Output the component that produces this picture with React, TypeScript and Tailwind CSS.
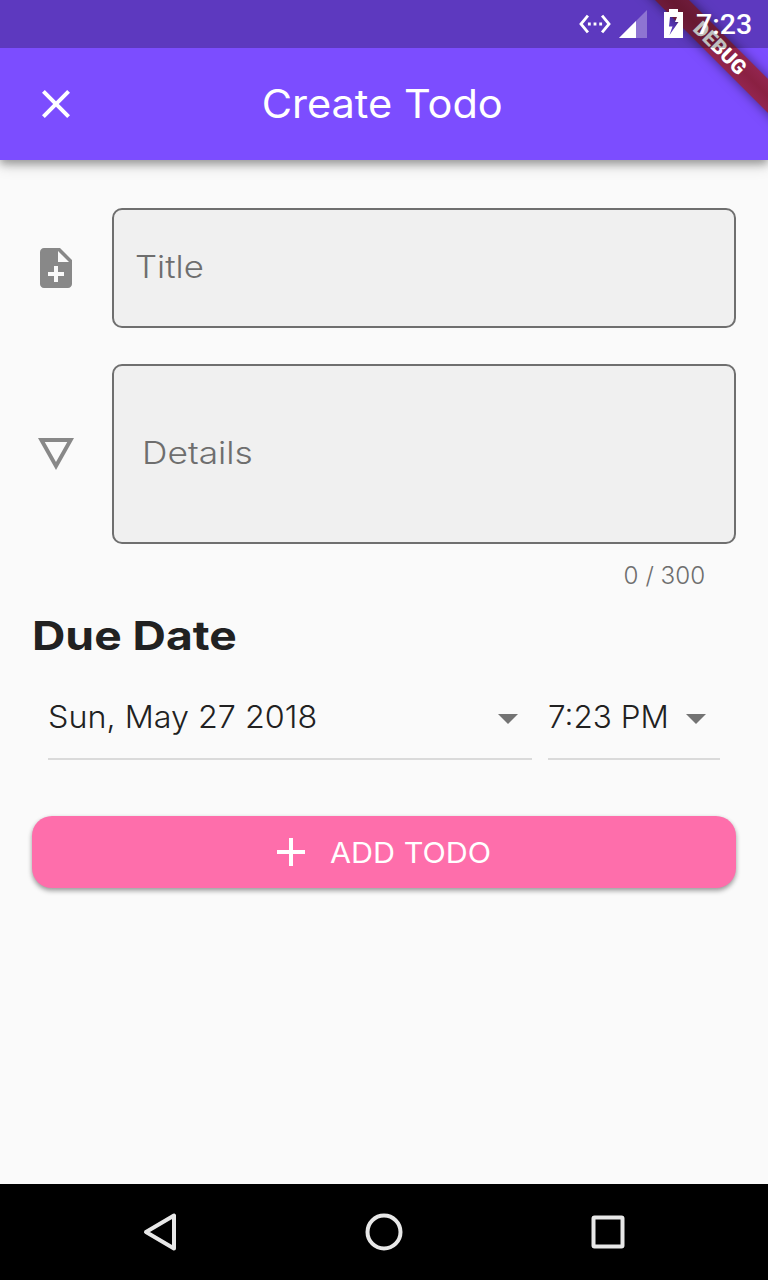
import React from "react";

type IconProps = { d: string; className?: string };

function Icon({ d, className = "" }: IconProps) {
  return (
    <svg viewBox="0 0 24 24" className={`size-12 shrink-0 fill-current ${className}`} aria-hidden="true">
      <path d={d} />
    </svg>
  );
}

const CLOSE =
  "M19 6.41L17.59 5 12 10.59 6.41 5 5 6.41 10.59 12 5 17.59 6.41 19 12 13.41 17.59 19 19 17.59 13.41 12z";
const NOTE_ADD =
  "M14 2H6c-1.1 0-1.99.9-1.99 2L4 20c0 1.1.89 2 1.99 2H18c1.1 0 2-.9 2-2V8l-6-6zm2 14h-3v3h-2v-3H8v-2h3v-3h2v3h3v2zm-3-7V3.5L18.5 9H13z";
const DETAILS = "M3 4l9 16 9-16H3zm3.38 2h11.25L12 16 6.38 6z";
const DROP_DOWN = "M7 10l5 5 5-5z";
const ADD = "M19 13h-6v6h-2v-6H5v-2h6V5h2v6h6v2z";
const ETHERNET =
  "M7.77 6.76L6.23 5.48.82 12l5.41 6.52 1.54-1.28L3.42 12l4.35-5.24zM7 13h2v-2H7v2zm10-2h-2v2h2v-2zm-6 2h2v-2h-2v2zm6.77-7.52l-1.54 1.28L20.58 12l-4.35 5.24 1.54 1.28L23.18 12l-5.41-6.52z";

function DebugBanner() {
  return (
    <div className="pointer-events-none absolute top-0 right-0 size-40 overflow-hidden">
      <div className="absolute top-[36px] left-[12px] flex h-6 w-[200px] rotate-45 items-center justify-center bg-linear-to-b from-[#93254f] via-[#8a2042] to-[#93254f] shadow-[0_0_12px_rgba(0,0,0,0.5)]">
        <span className="font-[Roboto] text-[20.4px] leading-6 font-black text-white">DEBUG</span>
      </div>
    </div>
  );
}

function StatusBar() {
  return (
    <div className="relative flex h-12 items-center justify-end bg-black/25 pr-[17px] text-white">
      <svg viewBox="0 0 24 24" className="mr-[7px] size-[34px] fill-current" aria-hidden="true">
        <path d={ETHERNET} />
      </svg>
      <svg viewBox="0 0 28 28" className="mr-[17px] size-7 fill-current" aria-hidden="true">
        <path d="M0 28L28 0v28z" opacity="0.3" />
        <path d="M0 28L17 11v17z" />
      </svg>
      <svg viewBox="0 0 19 30" className="mr-[13px] h-[30px] w-[19px] fill-current" aria-hidden="true">
        <path
          fillRule="evenodd"
          d="M5 0h9v3h5v26H0V3h5zM6 8L5 17.500H8.500L5.500 26L14.500 13H11L13 8z"
        />
      </svg>
      <span className="w-[55px] pt-[3px] text-right font-[Roboto] text-[28.5px] leading-none font-medium">7:23</span>
    </div>
  );
}

export default function App() {
  return (
    <div className="relative flex h-[1280px] w-[768px] flex-col overflow-hidden bg-[#fafafa] font-[Inter,sans-serif] text-[#212121]">
      <header className="relative flex h-40 shrink-0 flex-col bg-[#7c4dff] shadow-[0_4px_8px_rgba(0,0,0,0.3),0_6px_14px_rgba(0,0,0,0.14)]">
        <DebugBanner />
        <StatusBar />
        <div className="grid flex-1 grid-cols-[48px_1fr_48px] items-center px-8 text-white">
          <Icon d={CLOSE} />
          <h1 className="pr-[3px] pb-0.5 text-center text-[39px] leading-none font-normal">
            <span className="inline-block origin-center scale-x-[1.065] whitespace-nowrap">Create Todo</span>
          </h1>
        </div>
      </header>

      <main className="flex flex-1 flex-col px-8 pt-12">
        <div className="flex items-center gap-8">
          <Icon d={NOTE_ADD} className="text-[#888888]" />
          <div className="flex h-[120px] flex-1 items-center rounded-[10px] border-2 border-[#6f6f6f] bg-[#f0f0f0] pb-1 pl-[21px] text-[31px] leading-none font-light text-[#6e6e6e]">
            <span className="origin-left scale-x-[1.12]">Title</span>
          </div>
        </div>
        <div className="mt-9 flex items-center gap-8">
          <Icon d={DETAILS} className="text-[#888888]" />
          <div className="flex h-[180px] flex-1 items-center rounded-[10px] border-2 border-[#6f6f6f] bg-[#f0f0f0] pb-1 pl-[28px] text-[31px] leading-none font-light text-[#6e6e6e]">
            <span className="origin-left scale-x-[1.14]">Details</span>
          </div>
        </div>
        <div className="flex h-16 items-center justify-end pr-[31px] text-[23.5px] leading-none font-light text-[#6e6e6e]">
          <span className="origin-right scale-x-[1.03]">0 / 300</span>
        </div>

        <h2 className="flex h-14 items-center text-[40px] leading-none font-bold">
          <span className="origin-left scale-x-[1.155] whitespace-nowrap">Due Date</span>
        </h2>

        <div className="mt-3 flex gap-4 px-4 text-[31px] leading-none font-light">
          <button className="flex h-[84px] w-[484px] items-center justify-between border-b-2 border-[#dadada]">
            <span className="origin-left scale-x-[1.042] pb-0.5 whitespace-nowrap">Sun, May 27 2018</span>
            <Icon d={DROP_DOWN} className="mt-0.5 text-[#737373]" />
          </button>
          <button className="flex h-[84px] w-[172px] items-center justify-between border-b-2 border-[#dadada]">
            <span className="origin-left scale-x-[1.015] pb-0.5 whitespace-nowrap">7:23 PM</span>
            <Icon d={DROP_DOWN} className="mt-0.5 text-[#737373]" />
          </button>
        </div>

        <button className="mt-14 flex h-[72px] items-center rounded-[20px] bg-[#fe6eab] pl-[235px] text-[28px] leading-none font-normal text-white shadow-[0_3px_5px_rgba(0,0,0,0.32),0_1px_4px_rgba(0,0,0,0.1)]">
          <Icon d={ADD} />
          <span className="ml-[15px] origin-left scale-x-[1.09] pt-0.5 whitespace-nowrap">ADD TODO</span>
        </button>
      </main>

      <nav className="flex h-24 shrink-0 items-center justify-between bg-black px-[140px]">
        <svg viewBox="0 0 40 40" className="size-10 fill-none stroke-[#e8e8e8] stroke-4" aria-hidden="true">
          <path d="M34 3.500V36.500L6 20z" strokeLinejoin="round" />
        </svg>
        <svg viewBox="0 0 40 40" className="size-10 fill-none stroke-[#e8e8e8] stroke-4" aria-hidden="true">
          <circle cx="20" cy="20" r="16.500" />
        </svg>
        <svg viewBox="0 0 40 40" className="size-10 fill-none stroke-[#e8e8e8] stroke-4" aria-hidden="true">
          <rect x="5.500" y="5.500" width="29" height="29" rx="1" />
        </svg>
      </nav>
    </div>
  );
}
